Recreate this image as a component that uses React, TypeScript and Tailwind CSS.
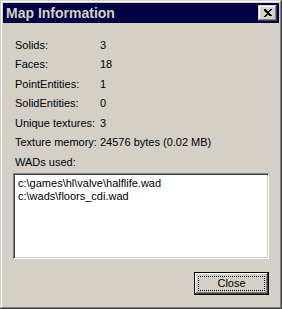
const rows: [string, string][] = [
  ['Solids:', '3'],
  ['Faces:', '18'],
  ['PointEntities:', '1'],
  ['SolidEntities:', '0'],
  ['Unique textures:', '3'],
  ['Texture memory:', '24576 bytes (0.02 MB)'],
];

const wads = ['c:\\games\\hl\\valve\\halflife.wad', 'c:\\wads\\floors_cdi.wad'];

const raised =
  'shadow-[inset_-1px_-1px_#404040,inset_1px_1px_#d4d0c8,inset_-2px_-2px_#808080,inset_2px_2px_#ffffff]';

export default function App() {
  return (
    <div
      className={`flex h-[309px] w-[282px] flex-col bg-[#d4d0c8] p-[3px] text-[11px] text-black ${raised}`}
      style={{ fontFamily: '"Liberation Sans", Arial, sans-serif' }}
    >
      <div className="flex h-[20px] shrink-0 items-center justify-between bg-[#000042] pl-[3px] pr-[2px]">
        <span className="text-[14px] font-bold text-[#d4d0c8]">Map Information</span>
        <button
          className={`flex h-[16px] w-[19px] items-center justify-center bg-[#d4d0c8] ${raised}`}
        >
          <svg width="10" height="9" viewBox="0 0 10 9">
            <path d="M1 0h2v1h1v1h2V1h1V0h2v1H8v1H7v1H6v1h1v1h1v1h1v1H7V7H6V6H4v1H3v1H1V7h1V6h1V5h1V4H3V3H2V2H1z" fill="#000" />
          </svg>
        </button>
      </div>

      <div className="flex flex-1 flex-col pl-[10px] pr-[10px] pt-[12px]">
        {rows.map(([label, value]) => (
          <div key={label} className="flex h-[19.5px] items-center pl-[2px]">
            <span className="w-[85px] shrink-0">{label}</span>
            <span>{value}</span>
          </div>
        ))}
        <div className="flex h-[19.5px] items-center pl-[2px]">WADs used:</div>

        <div className="mt-[1px] h-[86px] bg-white p-[2px] shadow-[inset_1px_1px_#808080,inset_-1px_-1px_#ffffff,inset_2px_2px_#404040,inset_-2px_-2px_#d4d0c8]">
          <div className="flex flex-col px-[3px] pt-[2px] leading-[13px]">
            {wads.map((w) => (
              <span key={w}>{w}</span>
            ))}
          </div>
        </div>

        <div className="mt-[13px] flex justify-end">
          <button className="h-[23px] w-[75px] border border-black bg-[#d4d0c8] p-[3px] shadow-[inset_-1px_-1px_#404040,inset_1px_1px_#ffffff,inset_-2px_-2px_#808080]">
            <span className="flex h-full w-full items-center justify-center border border-dotted border-black leading-none">
              Close
            </span>
          </button>
        </div>
      </div>
    </div>
  );
}
